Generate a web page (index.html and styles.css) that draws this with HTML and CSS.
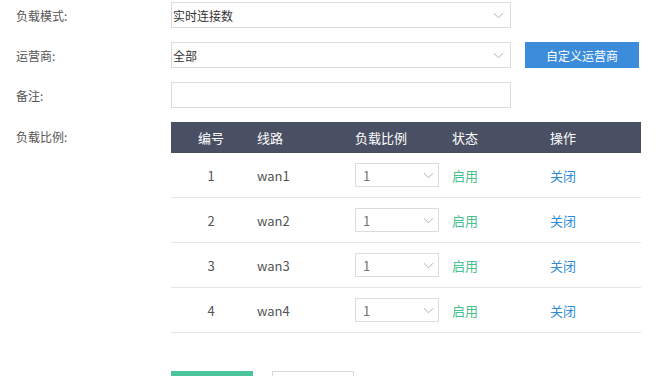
FILE: index.html
```html
<!DOCTYPE html>
<html lang="zh-CN">
<head>
<meta charset="utf-8">
<link rel="stylesheet" href="styles.css">
</head>
<body>
<div class="page">
  <div class="row">
    <div class="label">负载模式:</div>
    <div class="select wide"><span>实时连接数</span><svg class="chev" viewBox="0 0 12 7"><path d="M1 1 L6 6 L11 1" fill="none" stroke="#a8a8a8" stroke-width="1"/></svg></div>
  </div>
  <div class="row">
    <div class="label">运营商:</div>
    <div class="select wide"><span>全部</span><svg class="chev" viewBox="0 0 12 7"><path d="M1 1 L6 6 L11 1" fill="none" stroke="#a8a8a8" stroke-width="1"/></svg></div>
    <button class="btn-blue">自定义运营商</button>
  </div>
  <div class="row">
    <div class="label">备注:</div>
    <div class="input wide"></div>
  </div>
  <div class="row table-row">
    <div class="label">负载比例:</div>
    <div class="table">
      <div class="thead">
        <div class="c1">编号</div><div class="c2">线路</div><div class="c3">负载比例</div><div class="c4">状态</div><div class="c5">操作</div>
      </div>
      <div class="tr">
        <div class="c1">1</div><div class="c2">wan1</div>
        <div class="c3"><div class="select small"><span>1</span><svg class="chev" viewBox="0 0 12 7"><path d="M1 1 L6 6 L11 1" fill="none" stroke="#a8a8a8" stroke-width="1"/></svg></div></div>
        <div class="c4 on">启用</div><div class="c5 off">关闭</div>
      </div>
      <div class="tr">
        <div class="c1">2</div><div class="c2">wan2</div>
        <div class="c3"><div class="select small"><span>1</span><svg class="chev" viewBox="0 0 12 7"><path d="M1 1 L6 6 L11 1" fill="none" stroke="#a8a8a8" stroke-width="1"/></svg></div></div>
        <div class="c4 on">启用</div><div class="c5 off">关闭</div>
      </div>
      <div class="tr">
        <div class="c1">3</div><div class="c2">wan3</div>
        <div class="c3"><div class="select small"><span>1</span><svg class="chev" viewBox="0 0 12 7"><path d="M1 1 L6 6 L11 1" fill="none" stroke="#a8a8a8" stroke-width="1"/></svg></div></div>
        <div class="c4 on">启用</div><div class="c5 off">关闭</div>
      </div>
      <div class="tr">
        <div class="c1">4</div><div class="c2">wan4</div>
        <div class="c3"><div class="select small"><span>1</span><svg class="chev" viewBox="0 0 12 7"><path d="M1 1 L6 6 L11 1" fill="none" stroke="#a8a8a8" stroke-width="1"/></svg></div></div>
        <div class="c4 on">启用</div><div class="c5 off">关闭</div>
      </div>
    </div>
  </div>
  <div class="actions">
    <div class="btn-green"></div>
    <div class="btn-white"></div>
  </div>
</div>
</body>
</html>
```
FILE: styles.css
```css
html, body {
  margin: 0;
  padding: 0;
  overflow: hidden;
  background: #fff;
}
.page {
  font-family: "Noto Sans CJK SC", "Noto Sans", sans-serif;
  font-size: 12px;
  color: #555;
  padding: 2px 0 0 16px;
  display: flex;
  flex-direction: column;
  gap: 14px;
}
.row {
  display: flex;
  align-items: center;
  height: 26px;
}
.label {
  width: 155px;
  flex: none;
  color: #555;
}
.select, .input {
  box-sizing: border-box;
  border: 1px solid #dcdcdc;
  height: 26px;
  display: flex;
  align-items: center;
  justify-content: space-between;
  background: #fff;
  color: #333;
}
.wide {
  width: 340px;
  padding: 0 6px 0 1px;
}
.chev {
  width: 11px;
  height: 7px;
}
.btn-blue {
  margin-left: 14px;
  width: 114px;
  height: 26px;
  border: none;
  background: #3b8ddb;
  color: #fff;
  font-family: inherit;
  font-size: 12px;
  padding: 0;
}
.table-row {
  height: auto;
  align-items: flex-start;
}
.table-row .label {
  line-height: 30px;
}
.table {
  width: 470px;
  font-size: 13px;
}
.thead, .tr {
  display: grid;
  grid-template-columns: 80px 104px 97px 98px 91px;
  align-items: center;
}
.thead {
  height: 31px;
  background: #4a5064;
  color: #fff;
}
.tr {
  box-sizing: border-box;
  height: 45px;
  border-bottom: 1px solid #e5e5e5;
  color: #555;
}
.c1 { text-align: center; }
.c2 { padding-left: 6px; }
.small {
  width: 84px;
  height: 24px;
  padding: 0 4px 0 7px;
  color: #777;
}
.on { color: #47c18e; }
.off { color: #2d8bd4; }
.actions {
  display: flex;
  gap: 19px;
  padding-left: 155px;
  margin-top: 24px;
}
.btn-green, .btn-white {
  width: 82px;
  height: 30px;
  box-sizing: border-box;
}
.btn-green {
  background: #4cc49a;
}
.btn-white {
  background: #fff;
  border: 1px solid #d8d8d8;
}
```
